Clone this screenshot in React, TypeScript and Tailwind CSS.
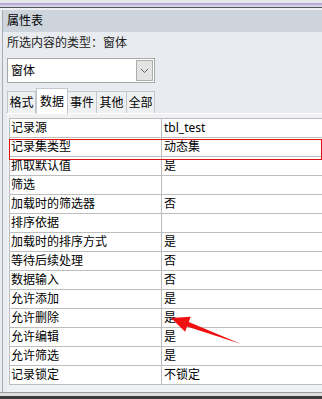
import React from "react";

const rows: [string, string][] = [
  ["记录源", "tbl_test"],
  ["记录集类型", "动态集"],
  ["抓取默认值", "是"],
  ["筛选", ""],
  ["加载时的筛选器", "否"],
  ["排序依据", ""],
  ["加载时的排序方式", "是"],
  ["等待后续处理", "否"],
  ["数据输入", "否"],
  ["允许添加", "是"],
  ["允许删除", "是"],
  ["允许编辑", "是"],
  ["允许筛选", "是"],
  ["记录锁定", "不锁定"],
];

const tabs = ["格式", "数据", "事件", "其他", "全部"];
const tabWidths = ["w-[29px]", "w-[32px]", "w-[29px]", "w-[30px]", "w-[28px]"];

export default function App() {
  return (
    <div className="w-[322px] h-[399px] overflow-hidden relative bg-[#e8ebef] flex flex-col font-['Noto_Sans','Noto_Sans_CJK_SC',sans-serif] text-[12px] text-black">
      <div className="h-[3px] bg-[#e6e8ec]" />
      <div className="h-[2px] bg-[#b8aad8]" />
      <div className="h-[2px] bg-[#d8d2e6]" />
      <div className="h-px bg-[#56565f]" />
      <div className="h-[2px] bg-[#eef0f3]" />
      <div className="flex-1 flex flex-col ml-[2px] border-l border-[#a9adb3]">
        <div className="h-[22px] bg-[#cdd4dc] pl-[4px] flex items-center leading-none">属性表</div>
        <div className="flex-1 flex flex-col pl-[4px]">
          <div className="pt-[3px] leading-[15px] text-[#222]">所选内容的类型：窗体</div>
          <div className="mt-[8px] w-[148px] h-[25px] bg-white border border-[#a8a8a8] flex items-center">
            <span className="pl-[3px] leading-none">窗体</span>
            <div className="ml-auto mr-px w-[17px] h-[21px] bg-[#e3e3e3] border border-[#adadad] flex items-center justify-center">
              <svg width="9" height="6" viewBox="0 0 9 6">
                <path d="M1 1 L4.5 4.5 L8 1" fill="none" stroke="#606060" strokeWidth="1" />
              </svg>
            </div>
          </div>
          <div className="mt-[5px] h-[25px] flex items-end">
            {tabs.map((t, i) =>
              i === 1 ? (
                <div
                  key={t}
                  className={`${tabWidths[i]} h-[26px] -mb-px bg-white border border-b-0 border-[#c3c6ca] flex items-center justify-center leading-none relative z-10`}
                >
                  {t}
                </div>
              ) : (
                <div
                  key={t}
                  className={`${tabWidths[i]} h-[22px] bg-[#eef0f2] border-t border-r border-[#c3c6ca] ${i === 0 ? "border-l" : ""} flex items-center justify-center leading-none`}
                >
                  {t}
                </div>
              )
            )}
          </div>
          <div className="flex-1 bg-[#f0f1f3] border-t border-white pt-[4px] pl-[2px]">
            <div className="w-[314px] grid grid-cols-[152px_1fr] border-t border-l border-[#bdbdbd] bg-white">
              {rows.map(([k, v]) => (
                <React.Fragment key={k}>
                  <div className="h-[19px] border-r border-b border-[#bdbdbd] pl-[1px] flex items-center leading-none whitespace-nowrap">
                    {k}
                  </div>
                  <div className="h-[19px] border-r border-b border-[#bdbdbd] pl-[2px] flex items-center leading-none whitespace-nowrap">
                    {v}
                  </div>
                </React.Fragment>
              ))}
            </div>
          </div>
        </div>
      </div>
      <div className="h-px bg-[#9c9c9c]" />
      <div className="h-[3px] bg-[#dedede]" />
      <div className="h-[3px] bg-[#3c3c3c]" />

      <div className="absolute left-[9px] top-[139px] w-[313px] h-[21px] border border-[#e01010]" />
      <svg className="absolute left-0 top-0 pointer-events-none" width="322" height="399" viewBox="0 0 322 399">
        <polygon
          points="171,318 190.7,316.8 188.8,322 241,344 187,326.6 185.1,331.8"
          fill="#f01010"
        />
      </svg>
    </div>
  );
}
